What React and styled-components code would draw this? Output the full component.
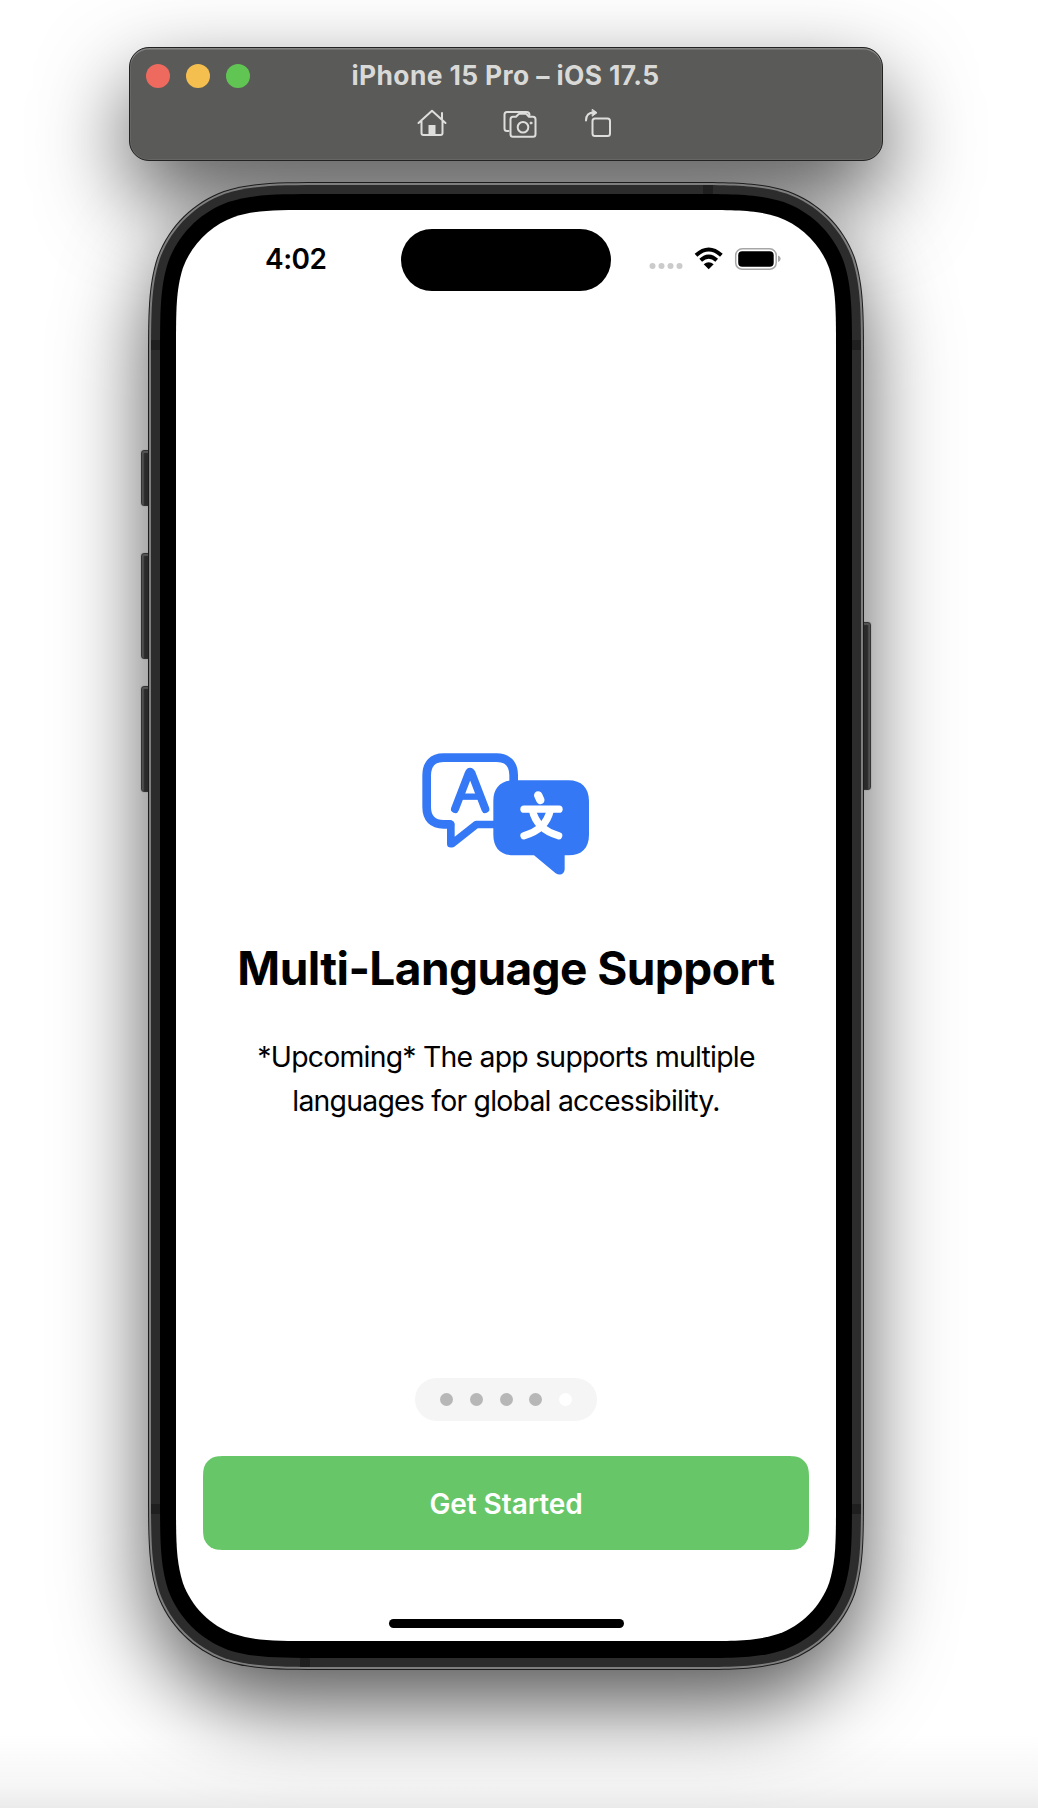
import React from "react";
import styled, { createGlobalStyle } from "styled-components";

const GlobalStyle = createGlobalStyle`
  *, *::before, *::after { box-sizing: border-box; }
  body {
    margin: 0;
    background: #fff;
    font-family: Inter, "Liberation Sans", sans-serif;
    -webkit-font-smoothing: antialiased;
  }
`;

/* Rounded rectangle with continuous-curvature corners. */
const squircle = (w, h, r) => {
  const a = 1.528665 * r, b = 1.08849 * r, c = 0.86841 * r;
  const d = 0.63149 * r, e = 0.07491 * r, f = 0.37282 * r, g = 0.16906 * r;
  return `path("M${a} 0H${w - a}C${w - b} 0 ${w - c} 0 ${w - d} ${e}C${w - f} ${g} ${w - g} ${f} ${w - e} ${d}C${w} ${c} ${w} ${b} ${w} ${a}V${h - a}C${w} ${h - b} ${w} ${h - c} ${w - e} ${h - d}C${w - g} ${h - f} ${w - f} ${h - g} ${w - d} ${h - e}C${w - c} ${h} ${w - b} ${h} ${w - a} ${h}H${a}C${b} ${h} ${c} ${h} ${d} ${h - e}C${f} ${h - g} ${g} ${h - f} ${e} ${h - d}C0 ${h - c} 0 ${h - b} 0 ${h - a}V${a}C0 ${b} 0 ${c} ${e} ${d}C${g} ${f} ${f} ${g} ${d} ${e}C${c} 0 ${b} 0 ${a} 0Z")`;
};

const Desktop = styled.main`
  position: relative;
  z-index: 0;
  width: 1038px;
  height: 1808px;
  padding: 47px 0 0 129px;
  overflow: hidden;
  background: linear-gradient(to bottom, #fff 0 1735px, #f6f6f6 1785px, #ebebeb 1808px);
`;

const TitleBar = styled.header`
  position: relative;
  width: 754px;
  height: 114px;
  padding-top: 13px;
  display: flex;
  flex-direction: column;
  border: 1px solid #222;
  border-radius: 20px;
  background: #5a5a58;
  box-shadow: inset 0 1.5px 0.5px #858583, inset 0 0 0 1px #666664;
  &::before {
    content: "";
    position: absolute;
    z-index: -1;
    inset: 0;
    border-radius: 20px;
    box-shadow: 0 36px 88px rgba(0, 0, 0, 0.68);
  }
`;

const TitleRow = styled.div`
  display: grid;
  grid-template-columns: 160px 1fr 160px;
  align-items: center;
  height: 30px;
`;

const Lights = styled.div`
  display: flex;
  gap: 16px;
  padding-left: 16px;
`;

const Light = styled.span`
  width: 24px;
  height: 24px;
  border-radius: 50%;
  background: ${(p) => p.$color};
`;

const WindowTitle = styled.h1`
  margin: -3px 0 0 -1px;
  text-align: center;
  font-size: 26.4px;
  line-height: 30px;
  font-weight: 700;
  letter-spacing: 0.38px;
  white-space: nowrap;
  color: #d9d9d7;
`;

const Tools = styled.nav`
  display: flex;
  align-items: flex-start;
  margin-top: 15px;
  padding-left: 283.5px;
`;

const ToolIcon = styled.svg`
  display: block;
  width: ${(p) => p.$w}px;
  height: 32px;
  margin-right: ${(p) => p.$gap || 0}px;
  fill: none;
  stroke: #dededc;
  stroke-width: 2;
  stroke-linejoin: round;
  stroke-linecap: round;
`;

const Phone = styled.section`
  position: relative;
  width: 716px;
  height: 1488px;
  margin: 21px 0 0 19px;
  &::before {
    content: "";
    position: absolute;
    z-index: -1;
    inset: 2px;
    border-radius: 124px;
    box-shadow: 0 36px 88px rgba(0, 0, 0, 0.68);
  }
`;

const Layer = styled.div`
  position: relative;
  width: ${(p) => p.$w}px;
  height: ${(p) => p.$h}px;
  padding: ${(p) => p.$pad}px;
  background: ${(p) => p.$color};
  clip-path: ${(p) => squircle(p.$w, p.$h, p.$r)};
`;

const SideButton = styled.span`
  position: absolute;
  top: ${(p) => p.$top}px;
  ${(p) => p.$side}: -7px;
  width: 11px;
  height: ${(p) => p.$h}px;
  border-radius: 3px;
  border: 1px solid #333;
  background: linear-gradient(to ${(p) => p.$side}, #2a2a2a 70%, #505050 88%);
  box-shadow: inset 0 2px 1px #555, 0 0 1px #555;
`;

const Antenna = styled.span`
  position: absolute;
  background: #1f1f1f;
  left: ${(p) => p.$x}px;
  top: ${(p) => p.$y}px;
  width: ${(p) => p.$w}px;
  height: ${(p) => p.$h}px;
`;

const Screen = styled.div`
  display: flex;
  flex-direction: column;
  align-items: center;
  width: 660px;
  height: 1431px;
  padding-top: 19px;
  background: #fff;
  color: #000;
  clip-path: ${squircle(660, 1431, 92)};
`;

const StatusBar = styled.div`
  display: grid;
  grid-template-columns: 225px 210px 225px;
  width: 660px;
  height: 62px;
`;

const Clock = styled.time`
  padding: 13px 0 0 89px;
  font-size: 28px;
  line-height: 34px;
  font-weight: 600;
  letter-spacing: -0.5px;
`;

const Island = styled.div`
  height: 61.5px;
  border-radius: 31px;
  background: #000;
`;

const StatusIcons = styled.svg`
  display: block;
  width: 140px;
  height: 28px;
  margin: 17px 0 0 34px;
`;

const LanguageIcon = styled.svg`
  display: block;
  width: 220px;
  height: 160px;
  margin: 439px 0 0 8px;
`;

const Heading = styled.h2`
  margin: 50px 0 0;
  font-size: 46px;
  line-height: 56px;
  font-weight: 700;
  letter-spacing: -0.58px;
  white-space: nowrap;
`;

const Description = styled.p`
  margin: 39px 0 0;
  text-align: center;
  font-size: 28.4px;
  line-height: 44px;
  font-weight: 400;
  letter-spacing: -0.77px;
  white-space: nowrap;
`;

const Pager = styled.div`
  display: flex;
  align-items: center;
  justify-content: center;
  gap: 16.8px;
  width: 182px;
  height: 43px;
  margin-top: 255px;
  border-radius: 22px;
  background: #f5f5f5;
`;

const PageDot = styled.span`
  width: 13px;
  height: 13px;
  border-radius: 50%;
  background: ${(p) => (p.$active ? "#fff" : "#b7b7b7")};
`;

const StartButton = styled.button`
  width: 606px;
  height: 94px;
  margin-top: 35px;
  padding: 1px 0 0;
  border: 0;
  background: #67c667;
  clip-path: ${squircle(606, 94, 17)};
  color: #fff;
  font-family: inherit;
  font-size: 28px;
  font-weight: 600;
  letter-spacing: -0.08px;
`;

const HomeIndicator = styled.div`
  width: 235px;
  height: 8.5px;
  margin-top: 69px;
  border-radius: 5px;
  background: #000;
`;

const pages = [0, 1, 2, 3, 4];

export default function App() {
  return (
    <>
      <GlobalStyle />
      <Desktop>
        <TitleBar>
          <TitleRow>
            <Lights>
              <Light $color="#ee6a5f" />
              <Light $color="#f5bf4f" />
              <Light $color="#61c554" />
            </Lights>
            <WindowTitle>iPhone 15 Pro – iOS 17.5</WindowTitle>
          </TitleRow>
          <Tools>
            <ToolIcon $w={38} $gap={48} viewBox="0 0 38 32">
              <path d="M4.500 17 18 4.700 31.500 17M7.500 15V27q0 2 2 2H26.500q2 0 2-2V15M28 13V7" />
              <path d="M14.500 28V19h7V28z" fill="#dededc" stroke="none" />
            </ToolIcon>
            <ToolIcon $w={40} $gap={42} viewBox="0 0 40 32">
              <path d="M8.500 25H7Q4.500 25 4.500 22.500V8.500Q4.500 6 7 6H26.500Q29.500 6 29.500 9" />
              <path d="M13 10.700h3l2.500-2.500q.6-.5 1.400-.5h5.400q.8 0 1.400.5L29 10.700h4Q35.500 10.700 35.500 13.200V28.200q0 2.500-2.500 2.500H13q-2.500 0-2.500-2.500V13.200Q10.500 10.700 13 10.700Z" />
              <circle cx="23" cy="21.300" r="5.300" />
              <circle cx="31" cy="17" r="1" fill="#dededc" strokeWidth="1" />
            </ToolIcon>
            <ToolIcon $w={34} viewBox="0 0 34 32">
              <path d="M4 14.500Q4 6.500 12 6.500" />
              <path d="M10.500 3.500 15 6.700 10.500 10Z" fill="#dededc" strokeWidth="1" />
              <rect x="10.500" y="12.500" width="17.500" height="17.500" rx="2.500" />
            </ToolIcon>
          </Tools>
        </TitleBar>

        <Phone>
          <SideButton $side="left" $top={267.5} $h={56} />
          <SideButton $side="left" $top={371} $h={106} />
          <SideButton $side="left" $top={504} $h={106} />
          <SideButton $side="right" $top={440} $h={168} />
          <Layer $w={716} $h={1488} $r={120} $pad={1} $color="#1c1c1c">
            <Layer $w={714} $h={1486} $r={119} $pad={2} $color="#7e7e7e">
              <Layer $w={710} $h={1482} $r={117} $pad={9} $color="#2c2c2c">
                <Antenna $x={0} $y={154.5} $w={9} $h={10} />
                <Antenna $x={701} $y={154.5} $w={9} $h={10} />
                <Antenna $x={0} $y={1319} $w={9} $h={10} />
                <Antenna $x={701} $y={1319} $w={9} $h={10} />
                <Antenna $x={552} $y={0} $w={10} $h={9} />
                <Antenna $x={149} $y={1473} $w={10} $h={9} />
                <Layer $w={692} $h={1464} $r={108} $pad={16} $color="#000">
                  <Screen>
                    <StatusBar>
                      <Clock>4:02</Clock>
                      <Island />
                      <StatusIcons viewBox="0 0 140 28">
                        <g fill="#cbcbcb">
                          <circle cx="7.500" cy="20" r="3" />
                          <circle cx="16.500" cy="20" r="3" />
                          <circle cx="25.500" cy="20" r="3" />
                          <circle cx="34.500" cy="20" r="3" />
                        </g>
                        <g transform="translate(49.700 2) scale(.3333)" fill="none" stroke="#000" strokeWidth="12">
                          <path d="M4 22Q42-13 80 22" />
                          <path d="M18 37Q42 15 66 37" />
                          <path d="M27 49Q42 36 57 49L42 64Z" fill="#000" stroke="none" />
                        </g>
                        <rect x="90.700" y="2.800" width="40.500" height="20.500" rx="6.500" fill="none" stroke="#a6a6a6" strokeWidth="1.500" />
                        <rect x="93.200" y="5.300" width="35.500" height="15.500" rx="4" />
                        <path d="M133 9.500Q135.700 10.500 135.700 12.800T133 16Z" fill="#a6a6a6" />
                      </StatusIcons>
                    </StatusBar>

                    <LanguageIcon viewBox="0 0 660 480">
                      <g fill="none" stroke="#3478f6" strokeLinecap="round" strokeLinejoin="round">
                        <path strokeWidth="26" d="M341 160V136C341 101 322 83 290 83H131C98 83 80 102 80 136V231C80 265 98 283 131 283H150" />
                        <path strokeWidth="23" d="M148 283.500H152.500V341H156L229 283.500H290" />
                        <path strokeWidth="24" d="M165 237 206 130Q210 120 215 130L256 237" />
                        <path strokeWidth="19" strokeLinecap="butt" d="M184 200H238" />
                      </g>
                      <path fill="#3478f6" d="M342 151H505C545 151 567 174 567 213V314C567 354 545 376 505 376H494V416C494 432 480 438 467 430L402 376H342C302 376 280 354 280 314V213C280 174 302 151 342 151Z" />
                      <g fill="none" stroke="#fff" strokeWidth="22" strokeLinecap="round" strokeLinejoin="round">
                        <path strokeWidth="25" d="M414.500 196 421 210" />
                        <path d="M372 237.500H477" />
                        <path d="M397 240C405 276 429 304 476 317" />
                        <path d="M451 240C443 276 419 304 372 317" />
                      </g>
                    </LanguageIcon>

                    <Heading>Multi-Language Support</Heading>
                    <Description>
                      *Upcoming* The app supports multiple
                      <br />
                      languages for global accessibility.
                    </Description>
                    <Pager>
                      {pages.map((page) => (
                        <PageDot key={page} $active={page === 4} />
                      ))}
                    </Pager>
                    <StartButton>Get Started</StartButton>
                    <HomeIndicator />
                  </Screen>
                </Layer>
              </Layer>
            </Layer>
          </Layer>
        </Phone>
      </Desktop>
    </>
  );
}
